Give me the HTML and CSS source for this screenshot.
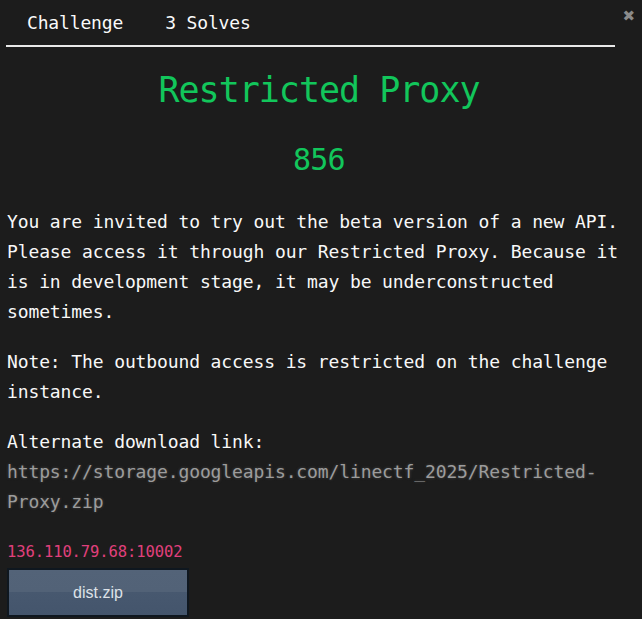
FILE: index.html
```html
<!DOCTYPE html>
<html>
<head>
<meta charset="utf-8">
<link rel="stylesheet" href="styles.css">
</head>
<body>
<div class="modal">
  <div class="header">
    <ul class="tabs">
      <li class="tab">Challenge</li>
      <li class="tab">3 Solves</li>
    </ul>
    <span class="close">&#10006;</span>
  </div>
  <h1 class="title">Restricted Proxy</h1>
  <div class="value">856</div>
  <div class="desc">
    <p>You are invited to try out the beta version of a new API. Please access it through our Restricted Proxy. Because it is in development stage, it may be underconstructed sometimes.</p>
    <p>Note: The outbound access is restricted on the challenge instance.</p>
    <p>Alternate download link:<br><a class="link" href="#">https://storage.googleapis.com/linectf_2025/Restricted-Proxy.zip</a></p>
  </div>
  <div class="conn">136.110.79.68:10002</div>
  <a class="btn" href="#">dist.zip</a>
</div>
</body>
</html>
```

FILE: styles.css
```css
html, body {
  margin: 0;
  padding: 0;
  background: #1c1c1c;
  height: 100%;
}
body {
  font-family: "DejaVu Sans Mono", "Liberation Mono", monospace;
  color: #f8f8f8;
}
.modal {
  padding: 0 6px 0 6px;
}
.header {
  display: flex;
  align-items: flex-start;
  height: 47px;
}
.tabs {
  flex: 1;
  display: flex;
  margin: 0;
  padding: 0 0 0 1px;
  list-style: none;
  height: 45px;
  border-bottom: 2px solid #e8e8e8;
}
.tab {
  padding: 11px 20px 0 20px;
  font-size: 18px;
  line-height: 24px;
  letter-spacing: -0.15px;
  color: #fafafa;
}
.tab + .tab {
  padding-left: 22px;
}
.close {
  width: 20px;
  text-align: right;
  padding-right: 1px;
  margin-top: 6px;
  font-family: "DejaVu Sans", sans-serif;
  font-size: 15px;
  line-height: 20px;
  color: #8a8a8a;
}
.title {
  margin: 18px 0 0 0;
  text-align: center;
  font-weight: normal;
  font-size: 35px;
  line-height: 50px;
  letter-spacing: -1.0px;
  color: #12c65b;
  padding-right: 4px;
}
.value {
  margin-top: 25px;
  text-align: center;
  font-size: 30px;
  line-height: 40px;
  letter-spacing: -0.8px;
  color: #12c65b;
  padding-right: 4px;
}
.desc {
  margin-top: 27px;
  padding-left: 1px;
  padding-right: 6px;
}
.desc p {
  margin: 0 0 20px 0;
  font-size: 18px;
  line-height: 30px;
  letter-spacing: -0.12px;
}
.link {
  color: #9c9c9c;
  text-decoration: none;
  text-shadow: 0 0 3px rgba(160,160,160,0.35);
}
.conn {
  margin-top: 0;
  padding-left: 1px;
  font-size: 15.5px;
  line-height: 30px;
  letter-spacing: -0.1px;
  color: #e0407c;
}
.btn {
  display: flex;
  align-items: center;
  justify-content: center;
  box-sizing: border-box;
  width: 182px;
  height: 49px;
  margin: 1px 0 0 1px;
  border: 2px solid #0f171f;
  background: linear-gradient(#536378 0%, #526277 48%, #47586f 49%, #44556c 100%);
  font-family: "Liberation Sans", Arial, sans-serif;
  font-size: 16px;
  color: #dde2e8;
  text-decoration: none;
}
```
